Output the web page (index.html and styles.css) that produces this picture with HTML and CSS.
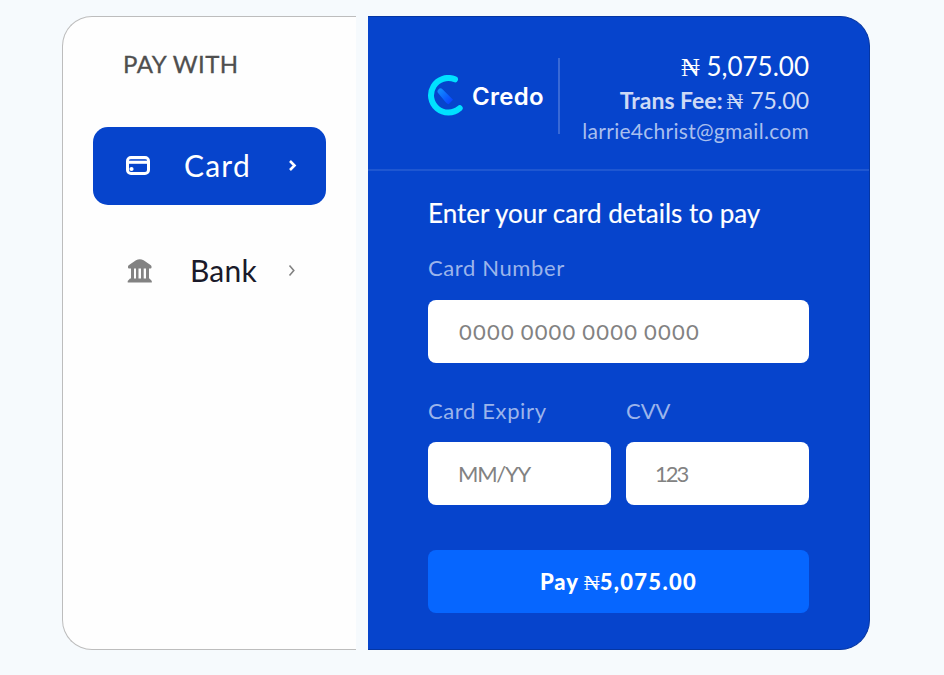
FILE: index.html
```html
<!DOCTYPE html>
<html lang="en">
<head>
<meta charset="utf-8">
<title>Credo Checkout</title>
<link rel="stylesheet" href="styles.css">
</head>
<body>
<main class="checkout">
  <aside class="methods">
    <h2 class="methods-title">PAY WITH</h2>
    <button class="method method-active" type="button">
      <svg class="method-icon" width="26" height="26" viewBox="0 0 26 26">
        <rect x="1.5" y="4.500" width="21" height="16" rx="3.500" fill="none" stroke="#fff" stroke-width="3"/>
        <path d="M3 9.300H21.500" stroke="#fff" stroke-width="3"/>
        <path d="M3.500 7H20.500" stroke="#5f86e0" stroke-width="1"/>
        <circle cx="5.500" cy="16" r="2.100" fill="#fff"/>
      </svg>
      <span class="method-name name-card">Card</span>
      <svg class="chevron" width="10" height="14" viewBox="0 0 10 14"><path d="M2 2L6.500 6.500L2 11" fill="none" stroke="#fff" stroke-width="2.600"/></svg>
    </button>
    <button class="method" type="button">
      <svg class="method-icon icon-bank" width="26" height="26" viewBox="0 0 26 26" fill="#828282">
        <path d="M1 8.500Q1 7.500 2 7L9 2.300Q12.800 .2 16.600 2.300L23.500 7Q24.500 7.500 24.500 8.500V9.500Q24.500 10.500 23.500 10.500H2Q1 10.500 1 9.500Z"/>
        <path d="M4 10h3v11h-3zM9 10h2.500v11h-2.500zM14 10h2.700v11h-2.700zM19 10h3v11h-3z"/>
        <path d="M3 20.500H22.500L24.800 23V24.500H.7V23Z"/>
      </svg>
      <span class="method-name name-bank">Bank</span>
      <svg class="chevron" width="10" height="14" viewBox="0 0 10 14"><path d="M1.500 1.500L5.800 6.500L1.500 11.500" fill="none" stroke="#828282" stroke-width="1.600"/></svg>
    </button>
  </aside>

  <section class="panel">
    <header class="panel-header">
      <div class="brand">
        <svg width="38" height="42" viewBox="0 0 38 42">
          <defs><linearGradient id="hand" x1="0" y1="0" x2="1" y2="1"><stop offset="0" stop-color="#1295ff"/><stop offset="1" stop-color="#0638ff"/></linearGradient></defs>
          <path d="M27 4.300A17.300 17.300 0 1 0 31.700 33.300" fill="none" stroke="#00e1ff" stroke-width="6" stroke-linecap="round"/>
          <path d="M10.500 18.500A2.800 2.800 0 0 1 14.500 14.300L25 24.700L20.700 29.300Q19 29 17.500 27Z" fill="url(#hand)"/>
        </svg>
        <span class="brand-name">Credo</span>
      </div>
      <div class="summary">
        <div class="amount"><span class="naira">₦</span> 5,075.00</div>
        <div class="fee"><b>Trans Fee:</b><span class="naira">₦</span><span class="fee-value">75.00</span></div>
        <div class="email">larrie4christ@gmail.com</div>
      </div>
    </header>
    <form class="card-form">
      <h1 class="form-title">Enter your card details to pay</h1>
      <label class="field">
        <span class="label label-number">Card Number</span>
        <input class="input-number" type="text" placeholder="0000 0000 0000 0000">
      </label>
      <div class="field-row">
        <label class="field">
          <span class="label">Card Expiry</span>
          <input class="input-expiry" type="text" placeholder="MM/YY">
        </label>
        <label class="field">
          <span class="label label-cvv">CVV</span>
          <input class="input-cvv" type="text" placeholder="123">
        </label>
      </div>
      <button class="pay" type="button"><span class="pay-word">Pay</span><span class="naira">₦</span><span class="pay-value">5,075.00</span></button>
    </form>
  </section>
</main>
</body>
</html>
```
FILE: styles.css
```css
* { box-sizing: border-box; }

body {
  margin: 0;
  background: #f6fafd;
  font-family: Lato, "Liberation Sans", sans-serif;
}

button, input { font-family: inherit; border: 0; margin: 0; }
h1, h2 { margin: 0; font-weight: 400; }
svg { display: block; flex: none; }

.checkout {
  display: flex;
  gap: 12px;
  height: 634px;
  margin: 16px 74px 0 62px;
}

.methods {
  width: 294px;
  padding: 32px 30px 0;
  background: #fefefe;
  border: 1px solid #bdbdbd;
  border-right: 0;
  border-radius: 30px 0 0 30px;
}

.methods-title {
  padding-left: 30px;
  margin-bottom: 48px;
  color: #4f4f4f;
  font-size: 24px;
  line-height: 30px;
  letter-spacing: 0.500px;
  -webkit-text-stroke: 0.300px;
}

.method {
  display: grid;
  grid-template-columns: 58px 104px 1fr;
  align-items: center;
  width: 233px;
  height: 78px;
  margin-bottom: 27px;
  padding: 0 0 0 33px;
  border-radius: 15px;
  background: transparent;
  color: #1a1a2a;
  text-align: left;
}

.method-active { background: #0644cc; color: #fff; }
.icon-bank { margin-left: 1px; }
.method-name { padding-bottom: 2px; font-size: 30px; line-height: 36px; white-space: nowrap; }
.name-card { letter-spacing: 1.200px; }
.name-bank { padding-left: 6px; letter-spacing: 0.200px; }

.panel {
  width: 502px;
  background: #0644cc;
  border: 1px solid #0536a3;
  border-left: 0;
  border-radius: 0 30px 30px 0;
  color: #fff;
}

.panel-header {
  display: flex;
  height: 154px;
  padding: 34px 60px 0;
  border-bottom: 2px solid #1f57d1;
}

.brand {
  display: flex;
  width: 132px;
  height: 76px;
  margin-top: 7px;
  align-items: center;
  border-right: 2px solid #3869d6;
}

.brand-name {
  padding: 2px 0 0 6px;
  font-family: Inter, sans-serif;
  font-size: 24px;
  font-weight: 600;
  line-height: 30px;
  letter-spacing: 0.300px;
}

.summary { flex: 1; text-align: right; white-space: nowrap; }
.naira { font-family: "Liberation Serif", serif; font-weight: 400; letter-spacing: 0; }
.amount { font-size: 26px; line-height: 30px; }
.fee { display: flex; align-items: baseline; justify-content: flex-end; margin-top: 1px; color: #cdd9f5; font-size: 23px; line-height: 32px; }
.fee .naira { margin: 0 7px 0 4px; }
.email { margin-top: -1px; color: #a9bfee; font-size: 21px; line-height: 28px; letter-spacing: 0.280px; }

.card-form { padding: 27px 60px 0; }
.form-title { font-size: 26px; line-height: 30px; white-space: nowrap; -webkit-text-stroke: 0.150px; }
.field { display: block; }
.label { display: block; color: #9bb4eb; font-size: 22px; line-height: 28px; letter-spacing: 0.620px; }
.label-number { margin: 26px 0 18px; }
.label-cvv { letter-spacing: 0; }

.field input {
  display: block;
  width: 100%;
  height: 63px;
  padding: 0 30px;
  border-radius: 8px;
  background: #fff;
  font-size: 22px;
}

.field input::placeholder { color: #828282; opacity: 1; }
.field .input-number { padding-left: 31px; letter-spacing: 1.200px; word-spacing: -1px; }
.input-expiry { letter-spacing: -1.300px; }
.field .input-cvv { padding-left: 29px; letter-spacing: -2px; }

.field-row { display: grid; grid-template-columns: 1fr 1fr; gap: 15px; margin-top: 34px; }
.field-row .label { margin-bottom: 17px; }

.pay {
  display: flex;
  align-items: baseline;
  justify-content: center;
  width: 100%;
  height: 63px;
  margin-top: 45px;
  padding: 0;
  border-radius: 8px;
  background: #0666ff;
  color: #fff;
  font-size: 22px;
  font-weight: 900;
  line-height: 63px;
}
.pay-word { letter-spacing: 0.900px; }
.pay .naira { margin-left: 5px; }
.pay-value { letter-spacing: 1.300px; }
```
